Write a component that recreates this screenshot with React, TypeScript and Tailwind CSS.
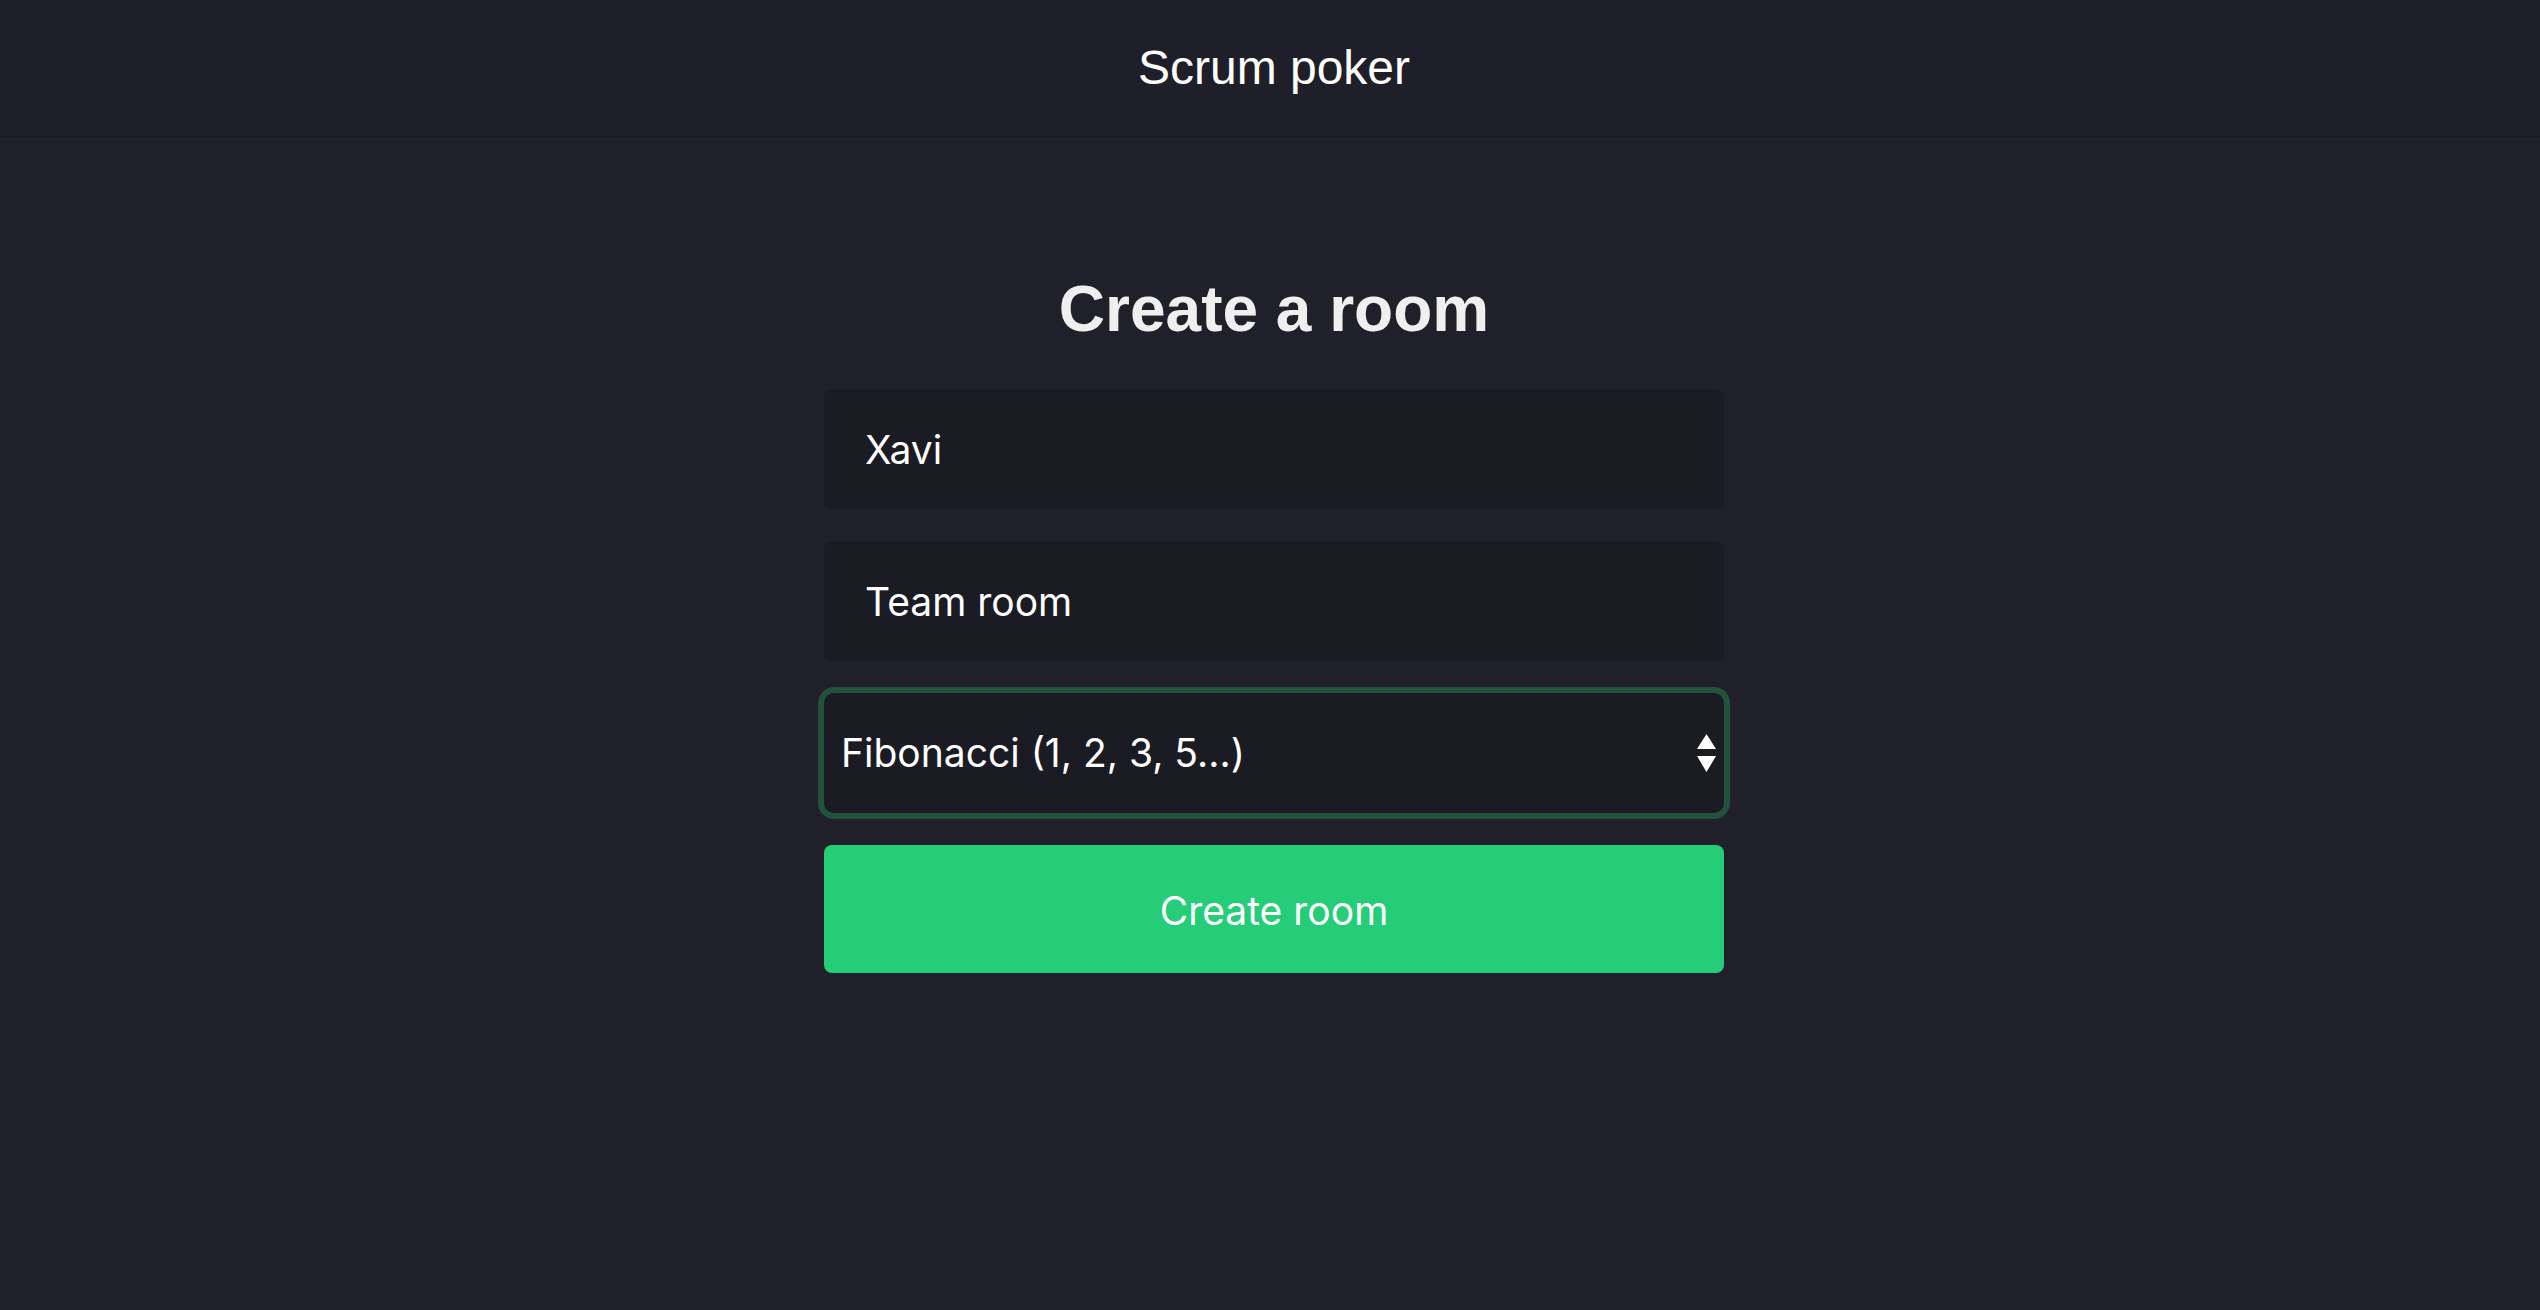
import { useState } from "react";

const ScaleArrows = () => (
  <svg
    width="19"
    height="38"
    viewBox="0 0 19 38"
    className="pointer-events-none absolute right-[8px] top-1/2 -translate-y-1/2"
  >
    <path d="M9.5 0 L19 15 L0 15 Z" fill="#ffffff" />
    <path d="M0 22 L19 22 L9.5 38 Z" fill="#ffffff" />
  </svg>
);

const App = () => {
  const [name, setName] = useState("Xavi");
  const [room, setRoom] = useState("Team room");
  const [scale, setScale] = useState("fibonacci");

  return (
    <div className="min-h-screen bg-[#20202a] font-['Inter',sans-serif] text-white">
      {/* Header */}
      <header className="flex h-[137px] items-center justify-center border-b border-[#1b1b23] bg-[#1f1f29] pl-[8px]">
        <h1 className="font-['Liberation_Sans',Arial,sans-serif] text-[48px] leading-none text-white">
          Scrum poker
        </h1>
      </header>

      {/* Form */}
      <div className="pl-[8px]">
        <main className="mx-auto flex w-[900px] flex-col items-center pt-[140px]">
          <h2 className="mb-[48px] font-['Liberation_Sans',Arial,sans-serif] text-[64px] font-bold leading-none text-[#efefef]">
            Create a room
          </h2>

          <div className="flex w-full flex-col gap-[32px]">
            <input
              value={name}
              onChange={(e) => setName(e.target.value)}
              className="h-[120px] w-full rounded-[8px] bg-[#1a1b23] px-[41px] text-[39px] text-white outline-none"
            />
            <input
              value={room}
              onChange={(e) => setRoom(e.target.value)}
              className="h-[120px] w-full rounded-[8px] bg-[#1a1b23] px-[41px] text-[39px] text-white outline-none"
            />

            <div className="relative">
              <select
                value={scale}
                onChange={(e) => setScale(e.target.value)}
                className="h-[120px] w-full appearance-none rounded-[10px] bg-[#1a1b23] pl-[17px] text-[39px] text-white outline-none ring-[6px] ring-[#22523c]"
              >
                <option value="fibonacci">Fibonacci (1, 2, 3, 5...)</option>
                <option value="tshirt">T-shirt (S, M, L, XL)</option>
                <option value="powers">Powers of 2 (1, 2, 4, 8...)</option>
              </select>
              <ScaleArrows />
            </div>

            <button className="h-[128px] w-full rounded-[8px] bg-[#26cd78] pt-[4px] text-[39px] text-white">
              Create room
            </button>
          </div>
        </main>
      </div>
    </div>
  );
};

export default App;
